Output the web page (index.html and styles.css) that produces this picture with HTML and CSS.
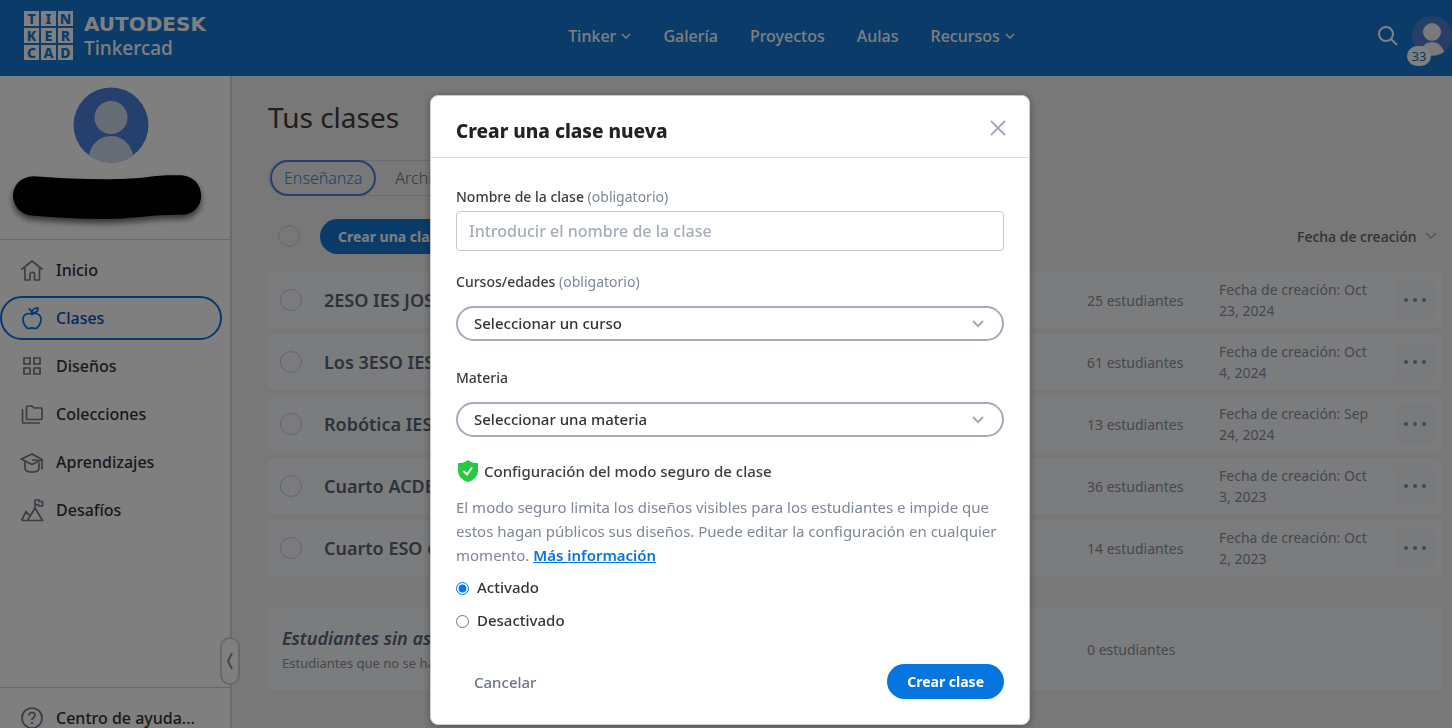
FILE: index.html
```html
<!DOCTYPE html>
<html lang="es">
<head>
  <meta charset="UTF-8">
  <meta name="viewport" content="width=device-width, initial-scale=1">
  <title>Tus clases - Tinkercad</title>
  <link rel="stylesheet" href="styles.css">
</head>
<body>

  <header class="topbar">
    <a class="brand" href="#" aria-label="Autodesk Tinkercad">
      <span class="brand-grid">
        <i>T</i><i>I</i><i>N</i>
        <i>K</i><i>E</i><i>R</i>
        <i>C</i><i>A</i><i>D</i>
      </span>
      <span class="brand-name">
        <strong>AUTODESK</strong>
        <span>Tinkercad</span>
      </span>
    </a>
    <nav class="main-nav">
      <a href="#">Tinker <svg width="10" height="6" viewBox="0 0 10 6"><path d="M1 1l4 4 4-4"/></svg></a>
      <a href="#">Galería</a>
      <a href="#">Proyectos</a>
      <a href="#">Aulas</a>
      <a href="#">Recursos <svg width="10" height="6" viewBox="0 0 10 6"><path d="M1 1l4 4 4-4"/></svg></a>
    </nav>
    <div class="user-tools">
      <button class="icon-btn" aria-label="Buscar">
        <svg width="22" height="22" viewBox="0 0 22 22"><circle cx="9" cy="9" r="7"/><path d="M14 14l6 6"/></svg>
      </button>
      <button class="icon-btn user-btn" aria-label="Perfil">
        <svg class="avatar" width="40" height="40" viewBox="0 0 40 40">
          <circle cx="20" cy="20" r="20" fill="#4f7cd0"/>
          <circle cx="20" cy="16" r="9" fill="#f4f4f4"/>
          <path d="M8 36c2-6 6-10 12-10s10 4 12 10c-7 5-17 5-24 0z" fill="#f4f4f4"/>
        </svg>
        <span class="badge">33</span>
      </button>
    </div>
  </header>

  <div class="layout">
    <aside class="sidebar">
      <div class="profile">
        <svg width="76" height="76" viewBox="0 0 76 76">
          <clipPath id="face"><circle cx="38" cy="38" r="37.5"/></clipPath>
          <g clip-path="url(#face)">
            <rect width="76" height="76" fill="#4a80da"/>
            <circle cx="38" cy="30.500" r="16.500" fill="#cfdbe8"/>
            <path d="M15 76c0-16 10-27 23-27s23 11 23 27z" fill="#cfdbe8"/>
          </g>
        </svg>
        <svg class="hidden-name" width="188" height="46" viewBox="0 0 190 46">
          <path d="M21 1c43 3 88 5 121 0 9-1 17-1 26-1 29 0 29 39 3 40-22-1-45 3-67 4-28 1-55-1-83-3-28-2-28-39 0-40z"/>
        </svg>
      </div>
      <nav class="side-nav">
        <a href="#"><svg viewBox="0 0 24 24"><path d="M1.500 11.500L12 3l10.500 8.500M5 10v12h5v-5.500c0-3 4.500-3 4.500 0V22h5V10"/></svg>Inicio</a>
        <a class="active" href="#"><svg viewBox="0 0 24 24"><path d="M12 8.500c-3-2-9-1-9 5 0 4 3 9 6 9 1.500 0 2-.6 3-.6s1.500.6 3 .6c3 0 6-5 6-9 0-6-6-7-9-5zM12 8.500C12 5 10.500 3.500 8.500 2.500M12 7c0-3.500 2.500-5 6-5 0 3.500-2.500 5-6 5z"/></svg>Clases</a>
        <a href="#"><svg viewBox="0 0 24 24"><path d="M4 4h6v6H4zM14 4h6v6h-6zM4 14h6v6H4zM14 14h6v6h-6z"/></svg>Diseños</a>
        <a href="#"><svg viewBox="0 0 24 24"><path d="M6.500 5.500v11c0 .6.400 1 1 1H21c.6 0 1-.4 1-1V7c0-.6-.4-1-1-1h-7l-2-2H7.500c-.6 0-1 .5-1 1.500zM2.500 7v13c0 .6.400 1 1 1H20"/></svg>Colecciones</a>
        <a href="#"><svg viewBox="0 0 24 24"><path d="M12 4L1.500 9 12 14.500 22 9.500zM5 11.500V19c1 4 13 4 14 0v-6.500M22 9.500V18M12 10l10 .5M21 18.500h2"/></svg>Aprendizajes</a>
        <a href="#"><svg viewBox="0 0 24 24"><path d="M1.500 22.500L6 13.500l3.500 4M7.500 22.500L15 10l7.500 12.500zM1.500 22.500h21M15 10V2h4v1.500h3.500V8h-4V6.500H15"/></svg>Desafíos</a>
      </nav>
      <button class="collapse" aria-label="Contraer menú">
        <svg width="8" height="18" viewBox="0 0 8 18"><path d="M6 1L2 9l4 8"/></svg>
      </button>
      <nav class="side-nav help">
        <a href="#"><svg viewBox="0 0 24 24"><circle cx="12" cy="12" r="10"/><path d="M9 9.500c0-4 6-4 6 0 0 2-3 2-3 4.500M12 16v2"/></svg>Centro de ayuda...</a>
      </nav>
    </aside>

    <main class="content">
      <h1>Tus clases</h1>
      <div class="tabs">
        <button class="tab selected">Enseñanza</button>
        <button class="tab">Archivadas</button>
      </div>
      <div class="toolbar">
        <input type="checkbox" class="round-check" aria-label="Seleccionar todas">
        <button class="btn-primary">Crear una clase</button>
        <div class="sort">
          <select aria-label="Ordenar por">
            <option>Fecha de creación</option>
          </select>
          <svg width="12" height="8" viewBox="0 0 12 8"><path d="M1 1l5 5 5-5"/></svg>
        </div>
      </div>

      <table class="classes">
        <tbody>
          <tr>
            <td class="col-check"><input type="checkbox" class="round-check" aria-label="2ESO"></td>
            <td class="col-name">2ESO IES JOSE</td>
            <td class="col-count">25 estudiantes</td>
            <td class="col-date">Fecha de creación: Oct 23, 2024</td>
            <td class="col-menu"><button class="more" aria-label="Acciones"><svg width="24" height="6" viewBox="0 0 24 6"><circle cx="3" cy="3" r="2"/><circle cx="12" cy="3" r="2"/><circle cx="21" cy="3" r="2"/></svg></button></td>
          </tr>
          <tr>
            <td class="col-check"><input type="checkbox" class="round-check" aria-label="Los 3ESO"></td>
            <td class="col-name">Los 3ESO IES</td>
            <td class="col-count">61 estudiantes</td>
            <td class="col-date">Fecha de creación: Oct 4, 2024</td>
            <td class="col-menu"><button class="more" aria-label="Acciones"><svg width="24" height="6" viewBox="0 0 24 6"><circle cx="3" cy="3" r="2"/><circle cx="12" cy="3" r="2"/><circle cx="21" cy="3" r="2"/></svg></button></td>
          </tr>
          <tr>
            <td class="col-check"><input type="checkbox" class="round-check" aria-label="Robótica"></td>
            <td class="col-name">Robótica IES</td>
            <td class="col-count">13 estudiantes</td>
            <td class="col-date">Fecha de creación: Sep 24, 2024</td>
            <td class="col-menu"><button class="more" aria-label="Acciones"><svg width="24" height="6" viewBox="0 0 24 6"><circle cx="3" cy="3" r="2"/><circle cx="12" cy="3" r="2"/><circle cx="21" cy="3" r="2"/></svg></button></td>
          </tr>
          <tr>
            <td class="col-check"><input type="checkbox" class="round-check" aria-label="Cuarto ACDE"></td>
            <td class="col-name">Cuarto ACDE</td>
            <td class="col-count">36 estudiantes</td>
            <td class="col-date">Fecha de creación: Oct 3, 2023</td>
            <td class="col-menu"><button class="more" aria-label="Acciones"><svg width="24" height="6" viewBox="0 0 24 6"><circle cx="3" cy="3" r="2"/><circle cx="12" cy="3" r="2"/><circle cx="21" cy="3" r="2"/></svg></button></td>
          </tr>
          <tr>
            <td class="col-check"><input type="checkbox" class="round-check" aria-label="Cuarto ESO"></td>
            <td class="col-name">Cuarto ESO e</td>
            <td class="col-count">14 estudiantes</td>
            <td class="col-date">Fecha de creación: Oct 2, 2023</td>
            <td class="col-menu"><button class="more" aria-label="Acciones"><svg width="24" height="6" viewBox="0 0 24 6"><circle cx="3" cy="3" r="2"/><circle cx="12" cy="3" r="2"/><circle cx="21" cy="3" r="2"/></svg></button></td>
          </tr>
        </tbody>
      </table>

      <section class="unassigned">
        <div class="unassigned-text">
          <h2>Estudiantes sin asignar</h2>
          <p>Estudiantes que no se han asignado</p>
        </div>
        <span class="unassigned-count">0 estudiantes</span>
      </section>
    </main>
  </div>

  <div class="overlay">
    <div class="modal" role="dialog" aria-labelledby="modalTitle">
      <div class="modal-header">
        <h2 id="modalTitle">Crear una clase nueva</h2>
        <button class="icon-btn close" aria-label="Cerrar">
          <svg width="18" height="18" viewBox="0 0 18 18"><path d="M2 2l14 14M16 2L2 16"/></svg>
        </button>
      </div>
      <form class="modal-body">
        <div class="field">
          <label for="className">Nombre de la clase <span>(obligatorio)</span></label>
          <input type="text" id="className" placeholder="Introducir el nombre de la clase">
        </div>
        <div class="field">
          <label for="grade">Cursos/edades <span>(obligatorio)</span></label>
          <div class="select">
            <select id="grade"><option>Seleccionar un curso</option></select>
            <svg width="14" height="9" viewBox="0 0 14 9"><path d="M2 2l5 5 5-5"/></svg>
          </div>
        </div>
        <div class="field">
          <label for="subject">Materia</label>
          <div class="select">
            <select id="subject"><option>Seleccionar una materia</option></select>
            <svg width="14" height="9" viewBox="0 0 14 9"><path d="M2 2l5 5 5-5"/></svg>
          </div>
        </div>
        <h3 class="safe-title">
          <svg width="20" height="22" viewBox="0 0 20 22"><path fill="#27c93f" d="M10 0c3 2.500 6 3 9 3 .6 0 1 .4 1 1v7c0 5-4 9-10 11C4 20 0 16 0 11V4c0-.6.400-1 1-1 3 0 6-.5 9-3z"/><path d="M5.500 11l3.500 3.500 5-7" fill="none" stroke="#fff" stroke-width="2"/></svg>
          Configuración del modo seguro de clase
        </h3>
        <p class="safe-text">El modo seguro limita los diseños visibles para los estudiantes e impide que estos hagan públicos sus diseños. Puede editar la configuración en cualquier momento. <a href="#">Más información</a></p>
        <div class="options">
          <label><input type="radio" name="safe" value="on" checked> Activado</label>
          <label><input type="radio" name="safe" value="off"> Desactivado</label>
        </div>
        <div class="modal-footer">
          <button type="button" class="btn-text">Cancelar</button>
          <button type="submit" class="btn-primary">Crear clase</button>
        </div>
      </form>
    </div>
  </div>

</body>
</html>
```
FILE: styles.css
```css
* {
  box-sizing: border-box;
}

body {
  margin: 0;
  height: 100vh;
  overflow: hidden;
  display: flex;
  flex-direction: column;
  font-family: "Noto Sans", sans-serif;
  font-size: 14px;
  color: #3c3c3c;
  background-color: #f0f0f0;
}

button, input, select {
  font-family: inherit;
  font-size: inherit;
  color: inherit;
}

button {
  cursor: pointer;
}

h1, h2, h3, p {
  margin: 0;
}

a {
  text-decoration: none;
}

svg {
  flex: none;
}

/* top bar */
.topbar {
  display: flex;
  align-items: center;
  justify-content: space-between;
  height: 76px;
  flex: none;
  padding-left: 24px;
  padding-bottom: 5px;
  background-color: #1477d3;
  color: #fff;
}

.brand {
  display: flex;
  align-items: center;
  gap: 11px;
  color: #fff;
}

.brand-grid {
  display: grid;
  grid-template-columns: repeat(3, 15px);
  grid-auto-rows: 15px;
  gap: 2px;
}

.brand-grid i {
  background-color: #fff;
  color: #1477d3;
  font-size: 14px;
  font-style: normal;
  font-weight: 800;
  line-height: 15px;
  text-align: center;
}

.brand-name {
  display: flex;
  flex-direction: column;
  font-size: 19px;
  font-weight: 500;
  line-height: 24px;
}

.brand-name strong {
  font-family: "DejaVu Sans", sans-serif;
  font-size: 20px;
  font-weight: 700;
}

.main-nav {
  display: flex;
  gap: 32px;
}

.main-nav a {
  display: flex;
  align-items: center;
  gap: 5px;
  color: #fff;
  font-size: 16px;
  font-weight: 500;
}

.main-nav svg, .user-tools svg {
  fill: none;
  stroke: #fff;
  stroke-width: 1.5;
}

.user-tools {
  display: flex;
  align-items: center;
  gap: 13px;
}

.icon-btn {
  display: flex;
  padding: 0;
  border: 0;
  background: none;
}

.user-tools svg {
  stroke-width: 2;
}

.user-tools .avatar {
  stroke: none;
}

.user-btn {
  position: relative;
}

.badge {
  position: absolute;
  left: -5px;
  top: 30px;
  width: 24px;
  line-height: 20px;
  border-radius: 10px;
  background-color: #fff;
  color: #1f6fc9;
  font-size: 13px;
  text-align: center;
}

/* sidebar */
.layout {
  display: flex;
  flex: 1;
  min-height: 0;
}

.sidebar {
  position: relative;
  display: flex;
  flex-direction: column;
  width: 232px;
  flex: none;
  border-right: 2px solid #d3d5de;
  background-color: #fff;
}

.profile {
  display: flex;
  flex-direction: column;
  align-items: center;
  gap: 12px;
  padding: 11px 20px 18px 12px;
  border-bottom: 1px solid #cfd2d9;
}

.hidden-name {
  margin-right: 8px;
  overflow: visible;
  filter: drop-shadow(0 4px 3px rgba(0, 0, 0, 0.6));
}

.side-nav {
  display: flex;
  flex-direction: column;
  gap: 4px;
  padding: 8px 8px 0 0;
}

.side-nav a {
  display: flex;
  align-items: center;
  gap: 12px;
  height: 44px;
  padding-left: 18px;
  border: 2px solid transparent;
  border-radius: 22px;
  color: #333;
  font-size: 16px;
  font-weight: 500;
}

.side-nav svg {
  width: 24px;
  height: 24px;
  fill: none;
  stroke: #737a89;
  stroke-width: 1.7;
}

.side-nav .active {
  border-color: #0673de;
  color: #0a4bb8;
}

.side-nav .active svg {
  stroke: #0673de;
}

.help {
  height: 41px;
  margin-top: auto;
  border-top: 1px solid #cfd2d9;
}

.help a {
  flex: none;
}

.collapse {
  position: absolute;
  right: -10px;
  bottom: 43px;
  display: flex;
  align-items: center;
  justify-content: center;
  width: 20px;
  height: 48px;
  padding: 0;
  border: 2px solid #cfd2da;
  border-radius: 10px;
  background-color: #fff;
}

.collapse svg {
  fill: none;
  stroke: #8a8f9c;
  stroke-width: 2;
}

/* class list */
.content {
  flex: 1;
  min-width: 0;
  padding: 22px 10px 0 36px;
}

h1 {
  font-size: 28px;
  font-weight: 400;
  line-height: 38px;
}

.tabs {
  display: flex;
  gap: 4px;
  width: 240px;
  height: 36px;
  margin-top: 24px;
  border: 1px solid #d0d8e6;
  border-radius: 18px;
}

.tab {
  margin: -1px 0 -1px 1px;
  padding: 0 12px;
  border: 2px solid transparent;
  border-radius: 18px;
  background: none;
  font-size: 16px;
  font-weight: 300;
  color: #6b7484;
}

.tab.selected {
  border-color: #4a80da;
  color: #4a80da;
}

.toolbar {
  display: flex;
  align-items: center;
  gap: 20px;
  height: 34px;
  margin: 23px 5px 13px 10px;
}

.round-check {
  appearance: none;
  display: block;
  width: 22px;
  height: 22px;
  margin: 0;
  border: 1px solid #c9ccd2;
  border-radius: 50%;
}

.btn-primary {
  height: 35px;
  padding: 0 20px;
  border: 0;
  border-radius: 18px;
  background-color: #0675df;
  color: #fff;
  font-weight: 700;
}

.toolbar .btn-primary {
  background-color: #1477d3;
  padding: 0 18px;
}

.sort, .select {
  display: grid;
  align-items: center;
}

.sort {
  margin-left: auto;
  color: #5d6374;
  font-weight: 500;
}

.sort select, .select select {
  grid-area: 1 / 1;
  appearance: none;
  border: 0;
  background: none;
  font-weight: inherit;
}

.sort select {
  padding: 0 20px 0 0;
}

.sort svg, .select svg {
  grid-area: 1 / 1;
  justify-self: end;
  fill: none;
  pointer-events: none;
  stroke: #a3abb8;
  stroke-width: 2;
}

.sort svg {
  stroke-width: 1.5;
}

.classes {
  width: 100%;
  table-layout: fixed;
  border-spacing: 0 6px;
}

.classes td {
  height: 56px;
  padding: 0;
  background-color: #f7f8fb;
}

.classes td:first-child {
  border-radius: 6px 0 0 6px;
}

.classes td:last-child {
  border-radius: 0 6px 6px 0;
}

.classes .col-check {
  width: 56px;
  padding-left: 12px;
}

.classes .col-name {
  color: #5a6577;
  font-size: 18px;
  font-weight: 600;
}

.classes .col-count {
  width: 132px;
  color: #8b909b;
}

.classes .col-date {
  width: 176px;
  padding-right: 22px;
  color: #8b909b;
  line-height: 21px;
}

.classes .col-menu {
  width: 47px;
}

.more {
  display: flex;
  align-items: center;
  justify-content: center;
  width: 40px;
  height: 40px;
  border: 0;
  border-radius: 6px;
  background-color: #f3f4f7;
}

.more svg {
  fill: #888d98;
}

.unassigned {
  display: flex;
  align-items: center;
  height: 82px;
  margin-top: 26px;
  padding: 0 14px;
  border-radius: 6px;
  background-color: #f7f8fb;
}

.unassigned-text {
  flex: 1;
}

.unassigned h2 {
  color: #5a6577;
  font-size: 18px;
  font-style: italic;
  font-weight: 600;
  line-height: 28px;
}

.unassigned p {
  color: #8b909b;
  font-size: 13px;
  line-height: 22px;
}

.unassigned-count {
  width: 341px;
  color: #8b909b;
}

/* dialog */
.overlay {
  position: fixed;
  inset: 0;
  display: flex;
  align-items: flex-start;
  justify-content: center;
  padding: 95px 0 0 8px;
  background-color: rgba(0, 0, 0, 0.5);
}

.modal {
  width: 600px;
  border: 1px solid #ccc;
  border-radius: 8px;
  background-color: #fff;
  box-shadow: 0 2px 8px rgba(0, 0, 0, 0.3);
}

.modal-header {
  display: flex;
  align-items: center;
  justify-content: space-between;
  height: 62px;
  padding: 8px 22px 0 25px;
  border-bottom: 1px solid #ddd;
}

.modal-header h2 {
  color: #222;
  font-size: 19px;
  font-weight: 800;
}

.close {
  padding-bottom: 6px;
}

.close svg {
  fill: none;
  stroke: #a3abb8;
  stroke-width: 2;
}

.modal-body {
  padding: 24px 25px 25px;
}

.field {
  margin-bottom: 16px;
  padding-top: 4px;
}

.field label {
  display: block;
  margin-bottom: 3px;
  font-weight: 500;
  line-height: 22px;
}

.field label span {
  color: #7e8797;
  font-weight: 400;
}

.field input {
  width: 100%;
  height: 40px;
  padding: 0 12px;
  border: 1px solid #c8c8c8;
  border-radius: 4px;
  font-size: 16px;
}

.field input::placeholder {
  color: #a5adba;
  font-weight: 500;
}

.select {
  margin-top: 13px;
  margin-bottom: 22px;
}

.select select {
  height: 35px;
  padding: 0 16px 2px;
  border: 2px solid #a3adba;
  border-radius: 18px;
  color: #333;
  font-size: 15px;
  font-weight: 500;
}

.select svg {
  margin-right: 19px;
}

.safe-title {
  display: flex;
  align-items: center;
  gap: 6px;
  padding-left: 2px;
  font-size: 15px;
  font-weight: 500;
  line-height: 24px;
}

.safe-text {
  margin-top: 12px;
  color: #7e8797;
  font-size: 15px;
  line-height: 24px;
}

.safe-text a {
  color: #0675df;
  font-weight: 600;
  text-decoration: underline;
}

.options {
  display: flex;
  flex-direction: column;
  gap: 9px;
  margin-top: 8px;
}

.options label {
  display: flex;
  align-items: center;
  gap: 8px;
  color: #333;
  font-size: 15px;
  font-weight: 500;
  line-height: 24px;
}

.options input {
  width: 13px;
  height: 13px;
  margin: 3px 0 0;
}

.modal-footer {
  display: flex;
  justify-content: space-between;
  margin-top: 32px;
}

.btn-text {
  padding: 0 18px;
  border: 0;
  background: none;
  color: #6c7485;
  font-size: 15px;
  font-weight: 500;
}
```
